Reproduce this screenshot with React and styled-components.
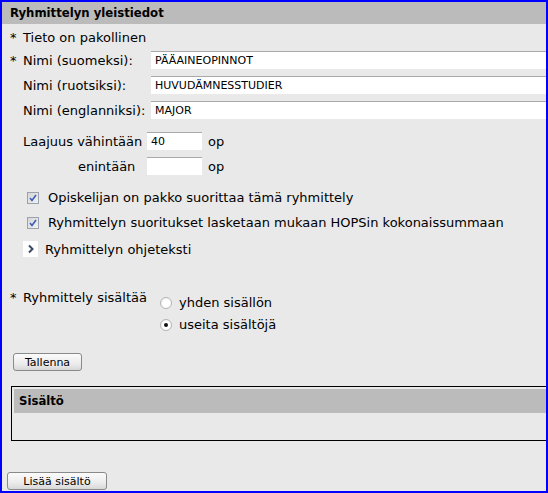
import React from "react";
import styled, { createGlobalStyle } from "styled-components";

const Global = createGlobalStyle`
  html, body { margin: 0; padding: 0; background: #ffffff; }
  * { box-sizing: border-box; }
`;

const Frame = styled.div`
  width: 548px;
  height: 493px;
  border: 2px solid #0000ff;
  background: #e9e9e9;
  overflow: hidden;
  font-family: "DejaVu Sans", Verdana, sans-serif;
  font-size: 13px;
  color: #000;
  display: flex;
  flex-direction: column;
`;

const SectionHeader = styled.div`
  height: ${(p) => p.$h || 22}px;
  line-height: ${(p) => p.$h || 22}px;
  background: #bbbbbb;
  padding-left: ${(p) => p.$indent || 8}px;
  font-weight: bold;
  font-size: 11.7px;
  white-space: nowrap;
`;

const Body = styled.div`
  padding: 6px 0 0 8px;
  display: flex;
  flex-direction: column;
`;

const Star = styled.span`
  display: inline-block;
  width: 13px;
`;

const Line = styled.div`
  height: 16px;
  line-height: 16px;
  white-space: nowrap;
`;

const NameGrid = styled.div`
  display: grid;
  grid-template-columns: 141px 420px;
  row-gap: 7px;
  margin-top: 5px;
  align-items: center;
  white-space: nowrap;
`;

const TextInput = styled.div`
  height: 18px;
  background: #fff;
  border-top: 1px solid #a9a9a9;
  padding-left: 4px;
  font-size: 11px;
  line-height: 17px;
  width: ${(p) => p.$w || 420}px;
`;

const ScopeGrid = styled.div`
  display: grid;
  grid-template-columns: 124px 55px auto;
  row-gap: 7px;
  margin-top: 13px;
  margin-left: 13px;
  align-items: center;
  white-space: nowrap;
`;

const ScopeLabel = styled.span`
  padding-left: ${(p) => p.$pad || 0}px;
`;

const Unit = styled.span`
  padding-left: 6px;
`;

const Checks = styled.div`
  display: flex;
  flex-direction: column;
  gap: 12px;
  margin-top: 16px;
  margin-left: 17px;
`;

const CheckRow = styled.div`
  display: flex;
  align-items: center;
  gap: 9px;
  height: 13px;
  white-space: nowrap;
`;

const Box = styled.span`
  width: 12px;
  height: 12px;
  border: 1px solid #9aa3ad;
  background: linear-gradient(135deg, #d6d6d6, #f2f2f2);
  display: inline-flex;
  align-items: center;
  justify-content: center;
  flex: none;
`;

const Expander = styled.div`
  display: flex;
  align-items: center;
  gap: 7px;
  margin-top: 12px;
  margin-left: 13px;
  white-space: nowrap;
`;

const ChevronBox = styled.span`
  width: 15px;
  height: 16px;
  background: #fff;
  display: inline-flex;
  align-items: center;
  justify-content: center;
`;

const ChoiceGrid = styled.div`
  display: grid;
  grid-template-columns: 150px auto;
  margin-top: 33px;
  white-space: nowrap;
`;

const ChoiceLabel = styled.div`
  line-height: 16px;
`;

const Radios = styled.div`
  display: flex;
  flex-direction: column;
  gap: 9px;
  padding-top: 6px;
`;

const RadioRow = styled.div`
  display: flex;
  align-items: center;
  gap: 7px;
  height: 13px;
`;

const Radio = styled.span`
  width: 12px;
  height: 12px;
  border-radius: 50%;
  border: 1px solid #b4b4b4;
  background: radial-gradient(circle at 60% 60%, #ffffff 45%, #e4e4e4 100%);
  display: inline-flex;
  align-items: center;
  justify-content: center;
  flex: none;
  &::after {
    content: "";
    width: 4px;
    height: 4px;
    border-radius: 50%;
    background: ${(p) => (p.$on ? "#111" : "transparent")};
  }
`;

const Button = styled.button`
  font-family: "DejaVu Sans", Verdana, sans-serif;
  font-size: 11px;
  color: #000;
  height: 18px;
  width: ${(p) => p.$w}px;
  padding: 0;
  border: 1px solid #8a8a8a;
  border-radius: 3px;
  background: linear-gradient(#fbfbfb, #ececec 60%, #d8d8d8);
  line-height: 15px;
`;

const SaveRow = styled.div`
  margin-top: 22px;
  margin-left: 3px;
`;

const ContentBox = styled.div`
  margin-top: 15px;
  margin-left: 1px;
  width: 560px;
  height: 55px;
  border: 1px solid #000;
  padding-top: 2px;
  padding-left: 2px;
`;

const AddRow = styled.div`
  margin-top: 31px;
  margin-left: -3px;
`;

function Check() {
  return (
    <Box>
      <svg width="8" height="8" viewBox="0 0 8 8">
        <path d="M1 4 L3 6.5 L7 1" fill="none" stroke="#3a5fb8" strokeWidth="1.6" />
      </svg>
    </Box>
  );
}

export default function App() {
  return (
    <>
      <Global />
      <Frame>
        <SectionHeader>Ryhmittelyn yleistiedot</SectionHeader>
        <Body>
          <Line>
            <Star>*</Star>Tieto on pakollinen
          </Line>
          <NameGrid>
            <span>
              <Star>*</Star>Nimi (suomeksi):
            </span>
            <TextInput>PÄÄAINEOPINNOT</TextInput>
            <span>
              <Star />Nimi (ruotsiksi):
            </span>
            <TextInput>HUVUDÄMNESSTUDIER</TextInput>
            <span>
              <Star />Nimi (englanniksi):
            </span>
            <TextInput>MAJOR</TextInput>
          </NameGrid>
          <ScopeGrid>
            <ScopeLabel>Laajuus vähintään</ScopeLabel>
            <TextInput $w={55}>40</TextInput>
            <Unit>op</Unit>
            <ScopeLabel $pad={55}>enintään</ScopeLabel>
            <TextInput $w={55} />
            <Unit>op</Unit>
          </ScopeGrid>
          <Checks>
            <CheckRow>
              <Check />
              Opiskelijan on pakko suorittaa tämä ryhmittely
            </CheckRow>
            <CheckRow>
              <Check />
              Ryhmittelyn suoritukset lasketaan mukaan HOPSin kokonaissummaan
            </CheckRow>
          </Checks>
          <Expander>
            <ChevronBox>
              <svg width="8" height="10" viewBox="0 0 8 10">
                <path d="M2 1.5 L5.5 5 L2 8.5" fill="none" stroke="#3b4a63" strokeWidth="2" />
              </svg>
            </ChevronBox>
            Ryhmittelyn ohjeteksti
          </Expander>
          <ChoiceGrid>
            <ChoiceLabel>
              <Star>*</Star>Ryhmittely sisältää
            </ChoiceLabel>
            <Radios>
              <RadioRow>
                <Radio />
                yhden sisällön
              </RadioRow>
              <RadioRow>
                <Radio $on />
                useita sisältöjä
              </RadioRow>
            </Radios>
          </ChoiceGrid>
          <SaveRow>
            <Button $w={69}>Tallenna</Button>
          </SaveRow>
          <ContentBox>
            <SectionHeader $indent={5} $h={24}>Sisältö</SectionHeader>
          </ContentBox>
          <AddRow>
            <Button $w={100}>Lisää sisältö</Button>
          </AddRow>
        </Body>
      </Frame>
    </>
  );
}
